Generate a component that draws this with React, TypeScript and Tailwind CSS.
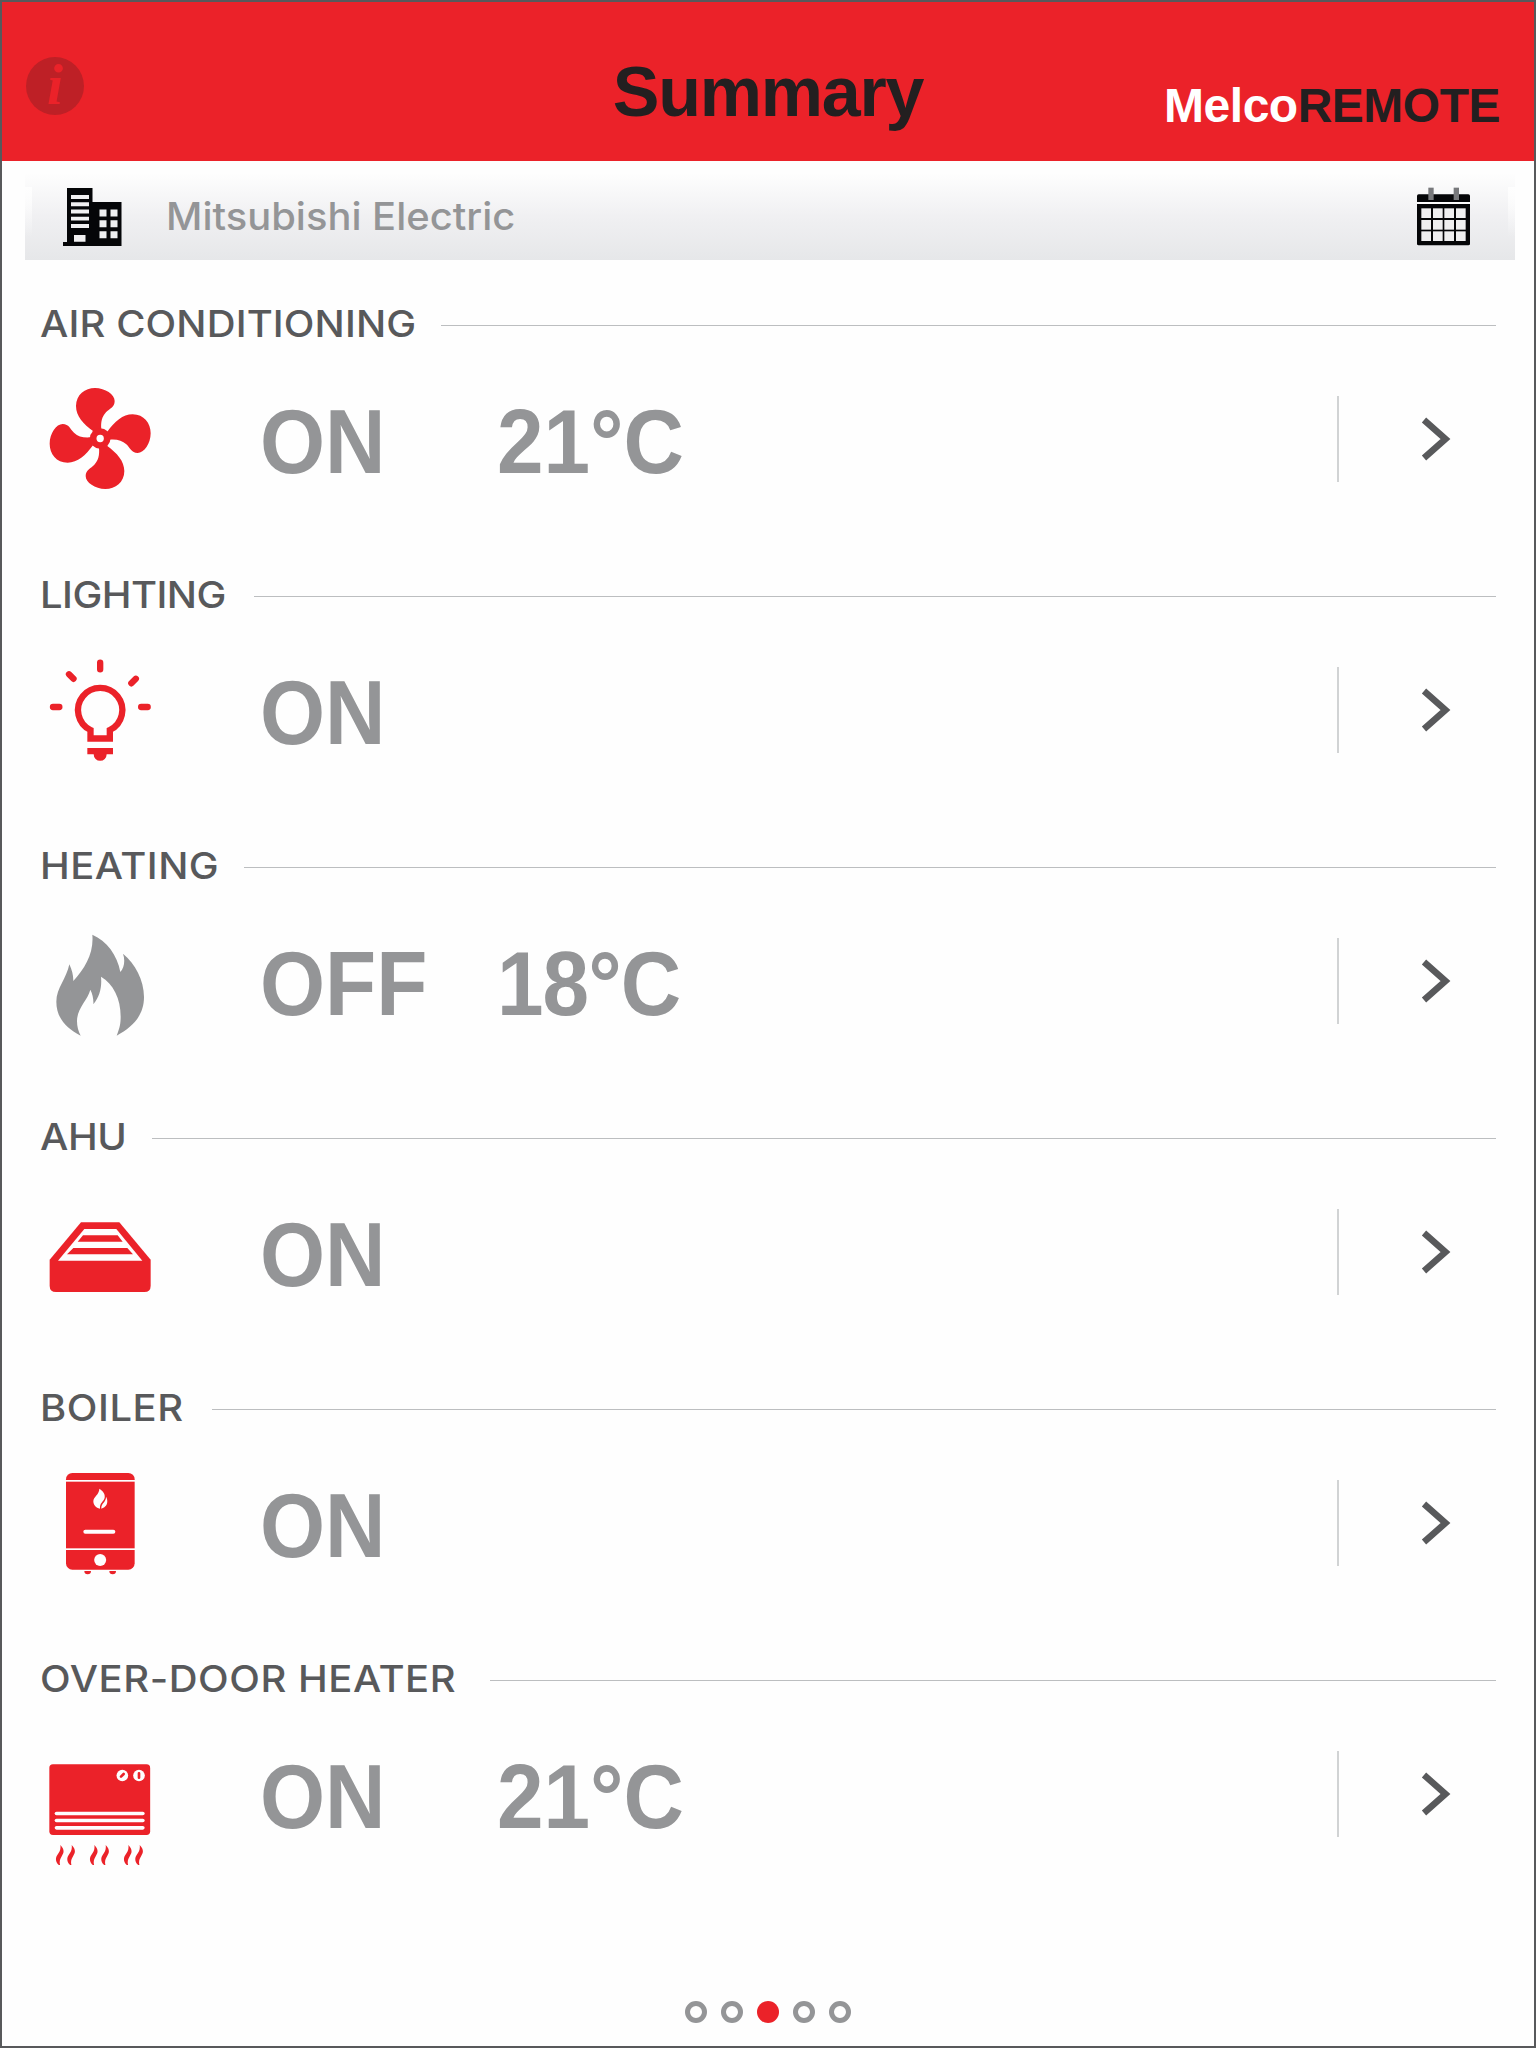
import React from 'react';

interface Section {
  title: string;
  titleClass: string;
  tracking: string;
  status: string;
  temperature?: string;
  temperatureClass?: string;
  icon: React.ReactNode;
}

const RED = '#eb2229';
const GREY = '#949597';

function FanIcon() {
  const blade =
    'M190 184 C160 162 138 138 138 108 C138 74 165 54 195 54 C226 54 254 74 254 93 C254 112 238 116 228 127 C216 140 212 155 214 178 Z';

  return (
    <svg viewBox="0 0 540 420" className="w-[180px] h-[140px] shrink-0" fill={RED}>
      {[0, 90, 180, 270].map((angle) => (
        <path key={angle} d={blade} transform={`rotate(${angle} 210.5 205.5)`} />
      ))}
      <circle cx="210.5" cy="205.5" r="31" />
      <circle cx="210.5" cy="205.5" r="11" fill="#fefefe" />
    </svg>
  );
}

function BulbIcon() {
  return (
    <svg viewBox="0 3 540 420" className="w-[180px] h-[140px] shrink-0" fill="none" stroke={RED} strokeWidth="19">
      <path d="M181.5 295.5 V270 A66.5 66.5 0 1 1 239.5 270 V295.5 Z" />
      <path d="M172 324 H249 V343 H230 A19 19 0 0 1 191 343 H172 Z" fill={RED} stroke="none" />
      <path
        d="M210.5 68 V88 M117 103 L130.5 116.5 M317.5 116.5 L304 130 M69 201 H88 M333.5 201 H353"
        strokeLinecap="round"
      />
    </svg>
  );
}

function FlameIcon() {
  return (
    <svg viewBox="0 -24 540 420" className="w-[180px] h-[140px] shrink-0" fill={GREY}>
      <path d="M187 44 C230 62 262 105 271 156 C283 143 286 120 279 101 C315 130 342 180 342 231 C342 285 310 320 260 347 C270 322 272 308 272 290 C272 235 250 192 213 170 C216 200 210 228 190 253 C191 238 188 222 181 209 C173 240 141 265 141 303 C141 320 145 333 152 347 C110 325 79 295 79 245 C79 205 110 175 118 133 C126 150 130 165 130 183 C165 145 192 100 187 44 Z" />
    </svg>
  );
}

function AhuIcon() {
  return (
    <svg viewBox="0 -51 540 420" className="w-[180px] h-[140px] shrink-0" fill={RED}>
      <path d="M153 67 H268 L362 179 V257 Q362 276 343 276 H78 Q59 276 59 257 V179 Z" />
      <path d="M163 87 H259 L337 182 H84 Z" fill="#fefefe" />
      <path d="M159 106 H263 L278 125 H143 Z M130 144 H292 L309 163 H111 Z" />
    </svg>
  );
}

function BoilerIcon() {
  return (
    <svg viewBox="0 -18 540 420" className="w-[180px] h-[140px] shrink-0" fill={RED}>
      <rect x="108" y="39" width="206" height="290" rx="19" />
      <path d="M163 333 H183 A10 10 0 0 1 163 333 Z M238 333 H258 A10 10 0 0 1 238 333 Z" />
      <g fill="#fefefe">
        <rect x="107" y="60" width="208" height="5" />
        <rect x="107" y="265" width="208" height="5" />
        <rect x="160" y="209" width="96" height="12" rx="6" />
        <circle cx="210.5" cy="300" r="18" />
        <path d="M208 86 C220 93 226 103 224 113 C222 124 208 128 210 146 C198 144 190 135 190 124 C190 110 208 104 208 86 Z" />
        <path d="M228 110 C234 120 233 132 226 139 C222 143 218 145 214 146 C213 129 229 126 228 110 Z" />
      </g>
    </svg>
  );
}

function HeaterIcon() {
  const wave = 'M91 315 C104 328 102 338 96 347 C90 357 87 364 91 378 C76 370 75 355 82 345 C89 336 93 328 91 315 Z';

  return (
    <svg viewBox="0 -45 540 420" className="w-[180px] h-[140px] shrink-0" fill={RED}>
      <rect x="58" y="73" width="302.500" height="212" rx="11" />
      <g fill="#fefefe">
        <rect x="74" y="215" width="270" height="11" rx="5.500" />
        <rect x="74" y="236" width="270" height="11" rx="5.500" />
        <rect x="74" y="258" width="270" height="11" rx="5.500" />
        <circle cx="277" cy="106.500" r="17.500" />
        <circle cx="327" cy="106.500" r="17.500" />
      </g>
      <path d="M273 110 L281 102 M327 100 V113" stroke={RED} strokeWidth="8" strokeLinecap="round" />
      {[0, 34, 102, 136, 204, 238].map((x) => (
        <path key={x} d={wave} transform={`translate(${x} 0)`} />
      ))}
    </svg>
  );
}

function BuildingIcon() {
  return (
    <svg viewBox="63 187 60 60" className="w-[60px] h-[60px] shrink-0">
      <path d="M67 188 H92.500 V202 H121.500 V246 H63 V242 H67 Z" fill="#050608" />
      <path
        d="M71 195 h18 v4 h-18 Z M71 202.200 h18 v4 h-18 Z M71 209.600 h18 v3.800 h-18 Z M71 216.800 h18 v3.800 h-18 Z M71 224 h18 v4 h-18 Z M74 235 h11.500 v6.700 h-11.500 Z"
        fill="#f1f1f2"
      />
      <path
        d="M99.500 209.500 h7 v7 h-7 Z M110.500 209.500 h7 v7 h-7 Z M99.500 220.300 h7 v7 h-7 Z M110.500 220.300 h7 v7 h-7 Z M99.500 231.300 h7 v7 h-7 Z M110.500 231.300 h7 v7 h-7 Z"
        fill="#eeeff0"
      />
    </svg>
  );
}

function CalendarIcon() {
  return (
    <svg viewBox="81 51 159 177" className="w-[53px] h-[59px] shrink-0">
      <path d="M81 96 V78 Q81 73 86 73 H235 Q240 73 240 78 V96 Z" fill="#050608" />
      <path d="M81 102 H240 V221 Q240 226 235 226 H86 Q81 226 81 221 Z" fill="#050608" />
      <rect x="81" y="96" width="159" height="6" fill="#fbfbfb" />
      <rect x="115" y="53" width="16" height="37" fill="#77787b" />
      <rect x="191" y="53" width="16" height="37" fill="#77787b" />
      {[115, 150, 184].map((y) =>
        [94, 129, 163, 198].map((x) => <rect key={`${x}-${y}`} x={x} y={y} width="29" height="29" fill="#efeff0" />)
      )}
    </svg>
  );
}

const sections: Section[] = [
  {
    title: 'AIR CONDITIONING',
    titleClass: 'w-[401px]',
    tracking: 'tracking-[0.1px]',
    status: 'ON',
    temperature: '21°C',
    icon: <FanIcon />,
  },
  { title: 'LIGHTING', titleClass: 'w-[214px]', tracking: 'tracking-[-0.5px]', status: 'ON', icon: <BulbIcon /> },
  {
    title: 'HEATING',
    titleClass: 'w-[204px]',
    tracking: 'tracking-[0.45px]',
    status: 'OFF',
    temperature: '18°C',
    temperatureClass: 'tracking-[-1px]',
    icon: <FlameIcon />,
  },
  { title: 'AHU', titleClass: 'w-[112px]', tracking: 'tracking-[-0.4px]', status: 'ON', icon: <AhuIcon /> },
  { title: 'BOILER', titleClass: 'w-[172px]', tracking: 'tracking-[0.5px]', status: 'ON', icon: <BoilerIcon /> },
  {
    title: 'OVER-DOOR HEATER',
    titleClass: 'w-[450px]',
    tracking: 'tracking-[0.5px]',
    status: 'ON',
    temperature: '21°C',
    icon: <HeaterIcon />,
  },
];

function SectionRow({ section }: { section: Section }) {
  return (
    <section className="h-[271px] pl-[28px] pr-[38px]">
      <div className="flex h-[70px] items-center pl-[10px]">
        <h2
          className={`${section.titleClass} ${section.tracking} shrink-0 -mt-[4px] whitespace-nowrap text-[37px] leading-none font-medium text-[#58595b]`}
        >
          <span className="inline-block origin-left scale-x-[1.08]">{section.title}</span>
        </h2>
        <div className="h-px flex-1 bg-[#bcbec0]" />
      </div>

      <div className="mt-[10px] flex h-[140px] items-center font-['Liberation_Sans',Arial,sans-serif] text-[90px] leading-none font-bold text-[#949597]">
        {section.icon}
        <div className="w-[235px] shrink-0 pt-[4px] pl-[50px] whitespace-nowrap">
          <span className="inline-block origin-left scale-x-93">{section.status}</span>
        </div>
        <div className="flex-1 pt-[4px] pl-[52px] whitespace-nowrap">
          <span className={`inline-block origin-left scale-x-93 ${section.temperatureClass ?? ''}`}>
            {section.temperature}
          </span>
        </div>
        <div className="-mt-[2px] h-[86px] w-[2px] shrink-0 bg-[#d1d3d4]" />
        <button className="-mt-[2px] flex h-[86px] w-[157px] shrink-0 items-center pl-[82px]">
          <svg viewBox="0 0 32 46" className="w-[32px] h-[46px]" fill="none" stroke="#58595b" strokeWidth="6.500">
            <path d="M3 4 L24.500 23 L3 42" />
          </svg>
        </button>
      </div>
    </section>
  );
}

export default function App() {
  const activePage = 2;

  return (
    <div className="flex h-[2048px] w-[1536px] flex-col overflow-hidden border-2 border-[#58595b] bg-[#fefefe] font-[Inter,sans-serif]">
      {/* Header bar */}
      <header className="grid h-[159px] shrink-0 grid-cols-3 bg-[#eb2229] font-['Liberation_Sans',Arial,sans-serif] font-bold text-[#231f20]">
        <div className="pt-[55px] pl-[24px]">
          <div className="flex h-[58px] w-[58px] items-center justify-center rounded-full bg-[#be2026] font-['Liberation_Serif',serif] text-[58px] leading-[70px] text-[#eb2229] italic">
            <span className="-mt-[3px]">i</span>
          </div>
        </div>
        <h1 className="pt-[54px] text-center text-[70px] leading-[72px] tracking-[-1.2px]">Summary</h1>
        <div className="pt-[79px] pr-[34px] text-right text-[48px] leading-[50px] tracking-[-0.5px]">
          <span className="text-white">Melco</span>REMOTE
        </div>
      </header>

      {/* Site bar */}
      <div className="relative mt-[12px] mr-[19px] ml-[23px] flex h-[87px] shrink-0 items-center bg-linear-to-b from-[#fefefe] via-[#f0f0f2] to-[#e6e7e9] pr-[45px] pl-[38px]">
        <div className="absolute top-[14px] left-0 h-[50px] w-[7px] bg-linear-to-b from-[#fefefe] to-transparent" />
        <div className="absolute top-[14px] right-0 h-[50px] w-[7px] bg-linear-to-b from-[#fefefe] to-transparent" />
        <BuildingIcon />
        <div className="-mt-[2px] flex-1 pl-[43px] text-[38px] leading-none font-medium text-[#949597]">
          <span className="inline-block origin-left scale-x-105">Mitsubishi Electric</span>
        </div>
        <CalendarIcon />
      </div>

      <main className="mt-[30px] shrink-0">
        {sections.map((section) => (
          <SectionRow key={section.title} section={section} />
        ))}
      </main>

      {/* Page dots */}
      <nav className="mt-[85px] flex shrink-0 justify-center gap-[14px]">
        {[0, 1, 2, 3, 4].map((page) => (
          <span
            key={page}
            className={
              page === activePage
                ? 'h-[22px] w-[22px] rounded-full bg-[#eb2229]'
                : 'h-[22px] w-[22px] rounded-full border-[5px] border-[#949597]'
            }
          />
        ))}
      </nav>
    </div>
  );
}
